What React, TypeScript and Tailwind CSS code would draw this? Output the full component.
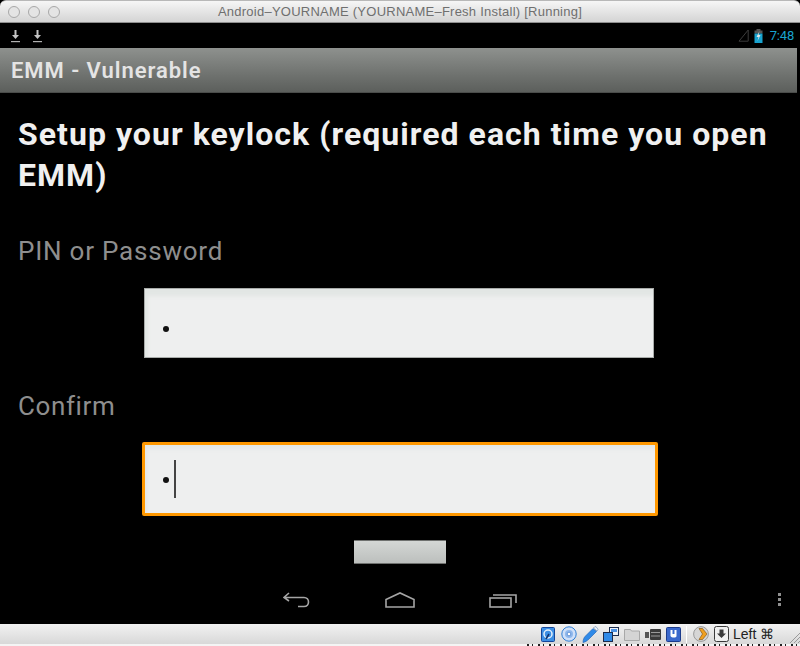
import React from "react";

const Dl = () => (
  <svg width="12" height="14" viewBox="0 0 12 14" className="block">
    <path d="M4.5 1h2v5h2.5L5.5 10 2 6h2.5z" fill="#c4c4c4" />
    <rect x="1" y="12" width="9" height="1.2" fill="#b0b0b0" />
  </svg>
);

const Field = ({ focused, caret }: { focused?: boolean; caret?: boolean }) => (
  <div
    className={
      focused
        ? "ml-[142px] mr-[142px] h-[74px] rounded-[2px] border-[3px] border-[#ff9800] bg-[#eeefef] shadow-[inset_0_8px_4px_-4px_#e4e8e6,inset_4px_0_3px_-2px_#e6e9e7] flex items-center pl-[18px]"
        : "ml-[144px] mr-[146px] h-[70px] border border-[#a9acaa] bg-[#eeefef] shadow-[inset_0_11px_4px_-4px_#e2e6e4,inset_5px_0_3px_-2px_#e4e8e6] flex items-center pl-[18px] pt-[12px]"
    }
  >
    <span className={focused ? "w-[6px] h-[6px] mt-[2px] rounded-full bg-[#111] shrink-0 blur-[0.4px]" : "w-[6px] h-[6px] rounded-full bg-[#111] shrink-0 blur-[0.4px]"} />
    {caret && <span className="ml-[5px] w-[2px] h-[38px] bg-[#444] shrink-0" />}
  </div>
);

export default function App() {
  return (
    <div className="w-[800px] h-[646px] overflow-hidden flex flex-col bg-black font-['Roboto',sans-serif]">
      <div className="h-[23px] shrink-0 rounded-t-[6px] border-t border-t-[#b8b8b8] border-b border-b-[#8f8f8f] bg-gradient-to-b from-[#f6f6f6] to-[#d4d4d4] flex items-center relative">
        <div className="flex gap-[8px] pl-[8px]">
          <span className="w-[12px] h-[12px] rounded-full border border-[#a8a8a8] bg-[#e4e4e4]" />
          <span className="w-[12px] h-[12px] rounded-full border border-[#a8a8a8] bg-[#e4e4e4]" />
          <span className="w-[12px] h-[12px] rounded-full border border-[#a8a8a8] bg-[#e4e4e4]" />
        </div>
        <div className="absolute left-0 right-0 text-center text-[13px] text-[#6f6f6f] font-['Liberation_Sans',sans-serif] tracking-[0.24px]">
          Android–YOURNAME (YOURNAME–Fresh Install) [Running]
        </div>
      </div>

      <div className="h-[25px] shrink-0 flex items-center pl-[10px] pr-[6px] bg-black">
        <div className="flex gap-[10px]"><Dl /><Dl /></div>
        <div className="ml-auto flex items-center gap-[4px]">
          <svg width="11" height="13" viewBox="0 0 11 13" className="mr-[1px]"><path d="M1 12.2L10.2 1v11.2z" fill="none" stroke="#3c3c3c" /></svg>
          <svg width="9" height="14" viewBox="0 0 9 14">
            <rect x="2.5" y="0" width="4" height="2" fill="#555" />
            <rect x="0.5" y="1.5" width="8" height="3" fill="#555" />
            <rect x="0.5" y="4.5" width="8" height="9.5" fill="#18a3cf" />
            <path d="M5.5 2L2.5 8h2l-1 4 3-6H4.5z" fill="#e6e6e6" />
          </svg>
          <span className="text-[13px] text-[#19a3d1] ml-[3px] tracking-[-0.2px]">7:48</span>
        </div>
      </div>

      <div className="h-[45px] shrink-0 mr-[3px] flex items-center pl-[11px] bg-gradient-to-b from-[#8e918e] to-[#5c5f5c] border-b border-[#4a4c4a]">
        <span className="text-[22px] font-semibold text-[#e4e4e4] tracking-[0.95px]">EMM - Vulnerable</span>
      </div>

      <div className="flex-1 min-h-0 flex flex-col">
        <h1 className="pt-[21px] pl-[18px] pr-[10px] text-[32px] leading-[41px] font-bold text-[#f0f0f0] tracking-[1.04px]">
          Setup your keylock (required each time you open EMM)
        </h1>
        <div className="mt-[38px] pl-[18px] text-[26px] leading-[34px] text-[#8e8e8e] tracking-[0.78px]">PIN or Password</div>
        <div className="mt-[20px]"><Field /></div>
        <div className="mt-[31px] pl-[18px] text-[26px] leading-[34px] text-[#8e8e8e] tracking-[0.6px]">Confirm</div>
        <div className="mt-[19px]"><Field focused caret /></div>
        <div className="mt-[24px] ml-[354px] w-[92px] h-[24px] border-t border-b border-[#6f716f] bg-gradient-to-b from-[#d4d7d5] to-[#bcbfbd]" />
      </div>

      <div className="h-[59px] shrink-0 flex items-center relative pt-[11px]">
        <div className="flex items-center pl-[283px] gap-[74px]">
          <svg width="28" height="16" viewBox="0 0 28 16" fill="none" stroke="#a5a5a5" strokeWidth="1.6">
            <path d="M6 1L1 5.5l5 3.5M1 5.5h20c6 0 6 9 0 9h-6" />
          </svg>
          <svg width="30" height="16" viewBox="0 0 30 16" fill="none" stroke="#a5a5a5" strokeWidth="1.6">
            <path d="M1 15V7.5L15 1l14 6.5V15z" />
          </svg>
          <svg width="28" height="16" viewBox="0 0 28 16" fill="none" stroke="#a5a5a5" strokeWidth="1.6">
            <rect x="1" y="6" width="21" height="9" />
            <path d="M4 3h23v8" />
          </svg>
        </div>
        <div className="absolute right-[19px] top-[28px] flex flex-col gap-[2px]">
          <span className="w-[3px] h-[3px] bg-[#8f8f8f]" />
          <span className="w-[3px] h-[3px] bg-[#8f8f8f]" />
          <span className="w-[3px] h-[3px] bg-[#8f8f8f]" />
        </div>
      </div>

      <div className="h-[20px] shrink-0 bg-gradient-to-b from-[#f2f2f2] to-[#d8d8d8] flex items-center pl-[541px] text-[14px] text-[#222] font-['Liberation_Sans',sans-serif] relative">
        <svg width="14" height="15" viewBox="0 0 14 15" className="shrink-0"><rect x="0.5" y="0.5" width="13" height="14" rx="1" fill="#3c8fe4" stroke="#14469a" /><circle cx="7" cy="7" r="4" fill="none" stroke="#e6f0fb" strokeWidth="1.5" /><path d="M5 12l3-5" stroke="#12346e" strokeWidth="1.5" /></svg>
        <svg width="16" height="16" viewBox="0 0 16 16" className="ml-[6px] shrink-0"><circle cx="8" cy="8" r="7.2" fill="#cfe0f8" stroke="#2f7fd6" /><circle cx="8" cy="8" r="4" fill="#8fb8ec" /><circle cx="8" cy="8" r="1.8" fill="#fff" stroke="#2f6fc6" strokeWidth="0.6" /></svg>
        <svg width="17" height="17" viewBox="0 0 17 17" className="ml-[5px] shrink-0"><path d="M1 16.5c0-3 1-5 2.5-6.5L11 2.5l3.5 3L7 13c-1.5 1.5-3.5 3-6 3.5z" fill="#2f8ae8" stroke="#1a5cb0" strokeWidth="0.6" /><path d="M11.5 2l1.5-1.5c1 0 2.5 1.5 3 3L15 5z" fill="#e8f0f8" stroke="#5a7ca8" strokeWidth="0.6" /></svg>
        <svg width="16" height="15" viewBox="0 0 16 15" className="ml-[4px] shrink-0"><rect x="6.5" y="0.5" width="9" height="8" fill="#eef2f8" stroke="#1c2c4c" /><rect x="8" y="2" width="6" height="3" fill="#4a90e2" /><rect x="0.5" y="5.5" width="9" height="9" fill="#2f8ae8" stroke="#1c2c4c" /></svg>
        <svg width="16" height="14" viewBox="0 0 16 14" className="ml-[5px] shrink-0"><path d="M0.5 2.5h6l1 1.5h8v9.5h-15z" fill="#d4d4d4" stroke="#a8a8a8" /></svg>
        <svg width="16" height="11" viewBox="0 0 16 11" className="ml-[5px] shrink-0"><rect x="5" y="0" width="11" height="11" rx="1" fill="#3a3a3a" /><rect x="6" y="3" width="9" height="1" fill="#9a9a9a" /><rect x="6" y="6.5" width="9" height="1" fill="#9a9a9a" /><rect x="0" y="3" width="4" height="6" fill="#555" /></svg>
        <svg width="15" height="15" viewBox="0 0 15 15" className="ml-[5px] shrink-0"><rect x="0.5" y="0.5" width="14" height="14" rx="1" fill="#3a68cc" stroke="#1c3c8c" /><path d="M4.5 3h2v4h2V3h2v6c0 2-5 2-6 0z" fill="#fff" /></svg>
        <span className="ml-[5px] w-px h-[17px] bg-white shrink-0" />
        <svg width="16" height="16" viewBox="0 0 16 16" className="ml-[6px] shrink-0"><circle cx="8" cy="8" r="7.4" fill="#d6d6d6" stroke="#9a9a9a" /><path d="M6 2.5h3.5L14 8l-4.5 5.5H6L9.5 8z" fill="#f0a020" stroke="#7a4a08" strokeWidth="0.6" /></svg>
        <svg width="15" height="16" viewBox="0 0 15 16" className="ml-[5px] shrink-0"><rect x="0.5" y="0.5" width="14" height="15" rx="2" fill="#efefef" stroke="#3a3a3a" /><path d="M5.5 3.5h4v4H12L7.5 12 3 7.5h2.5z" fill="#3a3a3a" /></svg>
        <span className="ml-[4px] whitespace-nowrap">Left ⌘</span>
        <svg width="10" height="10" viewBox="0 0 10 10" className="absolute right-0 bottom-[1px]"><path d="M0 10L10 0M4 10l6-6M8 10l2-2" stroke="#9a9a9a" fill="none" /></svg>
      </div>
      <div className="h-[2px] shrink-0 bg-[#f4f4f4] pl-[527px]">
        <div className="h-full bg-[repeating-linear-gradient(90deg,#222_0px,#222_2px,#f4f4f4_2px,#f4f4f4_5px,#222_5px,#222_6px,#f4f4f4_6px,#f4f4f4_11px)]" />
      </div>
    </div>
  );
}
